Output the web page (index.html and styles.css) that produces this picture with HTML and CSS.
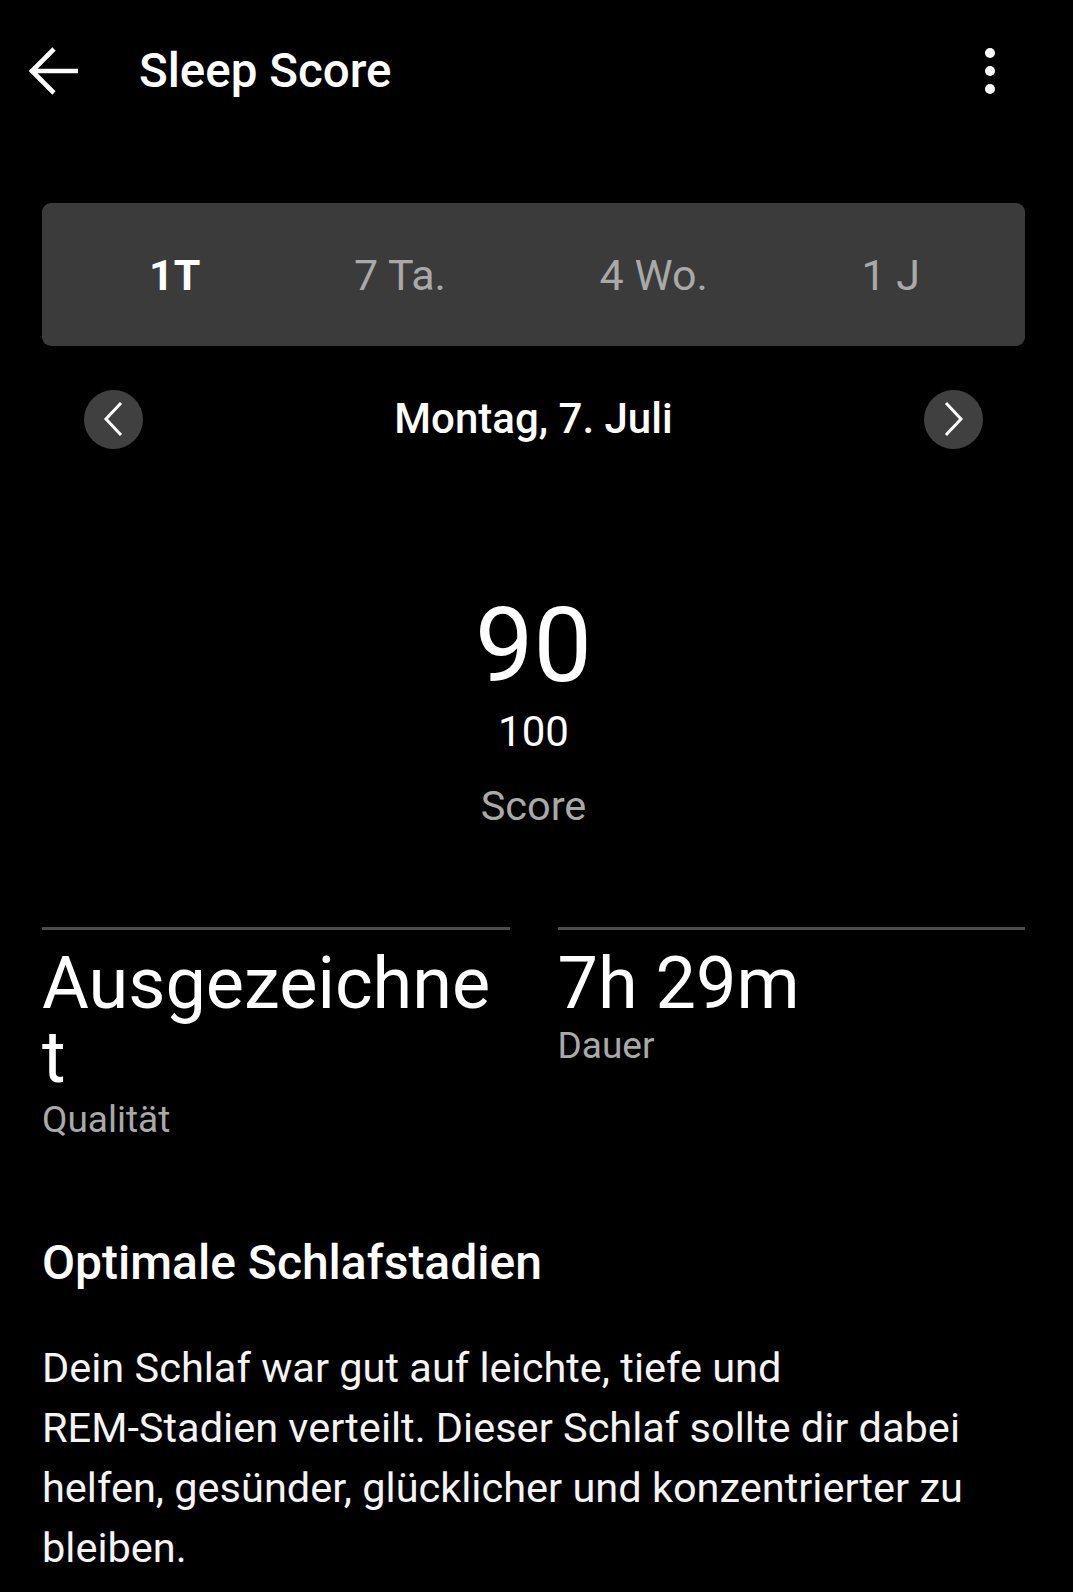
FILE: index.html
```html
<!DOCTYPE html>
<html lang="de">
<head>
<meta charset="utf-8">
<title>Sleep Score</title>
<link rel="stylesheet" href="styles.css">
</head>
<body>
<div class="app">
  <header class="topbar">
    <svg class="back" width="52" height="50" viewBox="0 0 52 50" aria-hidden="true">
      <path d="M50 25 H4 M26 3 L4 25 L26 47" fill="none" stroke="#fff" stroke-width="4.6" stroke-linecap="butt" stroke-linejoin="miter"/>
    </svg>
    <h1 class="title">Sleep Score</h1>
    <div class="menu" aria-label="Menü">
      <span class="dot"></span><span class="dot"></span><span class="dot"></span>
    </div>
  </header>

  <main class="content">
    <nav class="segments">
      <span class="seg active">1T</span>
      <span class="seg">7 Ta.</span>
      <span class="seg">4 Wo.</span>
      <span class="seg">1 J</span>
    </nav>

    <div class="daterow">
      <button class="navbtn" aria-label="Zurück">
        <svg width="24" height="36" viewBox="0 0 24 36"><path d="M19 2 L4 18 L19 34" fill="none" stroke="#fff" stroke-width="3"/></svg>
      </button>
      <div class="date">Montag, 7. Juli</div>
      <button class="navbtn" aria-label="Weiter">
        <svg width="24" height="36" viewBox="0 0 24 36"><path d="M5 2 L20 18 L5 34" fill="none" stroke="#fff" stroke-width="3"/></svg>
      </button>
    </div>

    <section class="score">
      <div class="score-value">90</div>
      <div class="score-max">100</div>
      <div class="score-label">Score</div>
    </section>

    <section class="stats">
      <div class="stat">
        <div class="stat-value">Ausgezeichnet</div>
        <div class="stat-label">Qualität</div>
      </div>
      <div class="stat">
        <div class="stat-value">7h 29m</div>
        <div class="stat-label">Dauer</div>
      </div>
    </section>

    <section class="info">
      <h2 class="info-title">Optimale Schlafstadien</h2>
      <p class="info-text">Dein Schlaf war gut auf leichte, tiefe und <span class="nowrap">REM-Stadien</span> verteilt. Dieser Schlaf sollte dir dabei helfen, gesünder, glücklicher und konzentrierter zu bleiben.</p>
    </section>
  </main>
</div>
</body>
</html>
```

FILE: styles.css
```css
html, body {
  margin: 0;
  padding: 0;
  background: #000;
}

body {
  font-family: Roboto, "Noto Sans", "Liberation Sans", sans-serif;
  color: #fff;
  width: 1073px;
  min-height: 1592px;
}

.topbar {
  height: 142px;
  display: flex;
  align-items: center;
  padding-left: 28px;
  padding-right: 78px;
}

.back {
  display: block;
  flex: none;
}

.title {
  margin: 0 0 0 59px;
  font-size: 47.5px;
  line-height: 54px;
  font-weight: 500;
  flex: 1;
}

.menu {
  display: flex;
  flex-direction: column;
  gap: 8px;
  align-items: center;
}

.dot {
  width: 10px;
  height: 10px;
  border-radius: 50%;
  background: #fff;
}

.content {
  padding: 0 48px 0 42px;
}

.segments {
  margin-top: 61px;
  height: 143px;
  background: #3b3b3b;
  border-radius: 9px;
  display: flex;
  align-items: center;
  justify-content: space-between;
  padding: 0 105px 0 107px;
  box-sizing: border-box;
}

.seg {
  font-size: 43px;
  line-height: 52px;
  color: #a9a9a9;
  font-weight: 400;
}

.seg.active {
  color: #fff;
  font-weight: 700;
}

.daterow {
  margin-top: 44px;
  height: 58px;
  display: flex;
  align-items: center;
  justify-content: space-between;
  padding: 0 42px;
}

.navbtn {
  width: 59px;
  height: 59px;
  border-radius: 50%;
  border: none;
  background: #404040;
  padding: 0;
  display: flex;
  align-items: center;
  justify-content: center;
}

.date {
  font-size: 42px;
  line-height: 50px;
  font-weight: 500;
}

.score {
  margin-top: 146px;
  display: flex;
  flex-direction: column;
  align-items: center;
}

.score-value {
  font-size: 104px;
  line-height: 104px;
  font-weight: 400;
}

.score-max {
  margin-top: 9px;
  font-size: 42px;
  line-height: 50px;
}

.score-label {
  margin-top: 24px;
  font-size: 41.5px;
  line-height: 50px;
  color: #a9a9a9;
}

.stats {
  margin-top: 96px;
  display: grid;
  grid-template-columns: 1fr 1fr;
  column-gap: 48px;
}

.stat {
  border-top: 3px solid #4d4d4d;
  padding-top: 17px;
  min-width: 0;
}

.stat-value {
  font-size: 72px;
  line-height: 74px;
  word-break: break-all;
}

.stat-label {
  font-size: 37px;
  line-height: 50px;
  color: #a9a9a9;
}

.info {
  margin-top: 89px;
}

.info-title {
  margin: 0;
  font-size: 48px;
  line-height: 58px;
  font-weight: 500;
}

.info-text {
  margin: 46px 0 0 0;
  font-size: 41.5px;
  line-height: 60px;
  color: #f4f4f4;
}

.nowrap {
  white-space: nowrap;
}
```
